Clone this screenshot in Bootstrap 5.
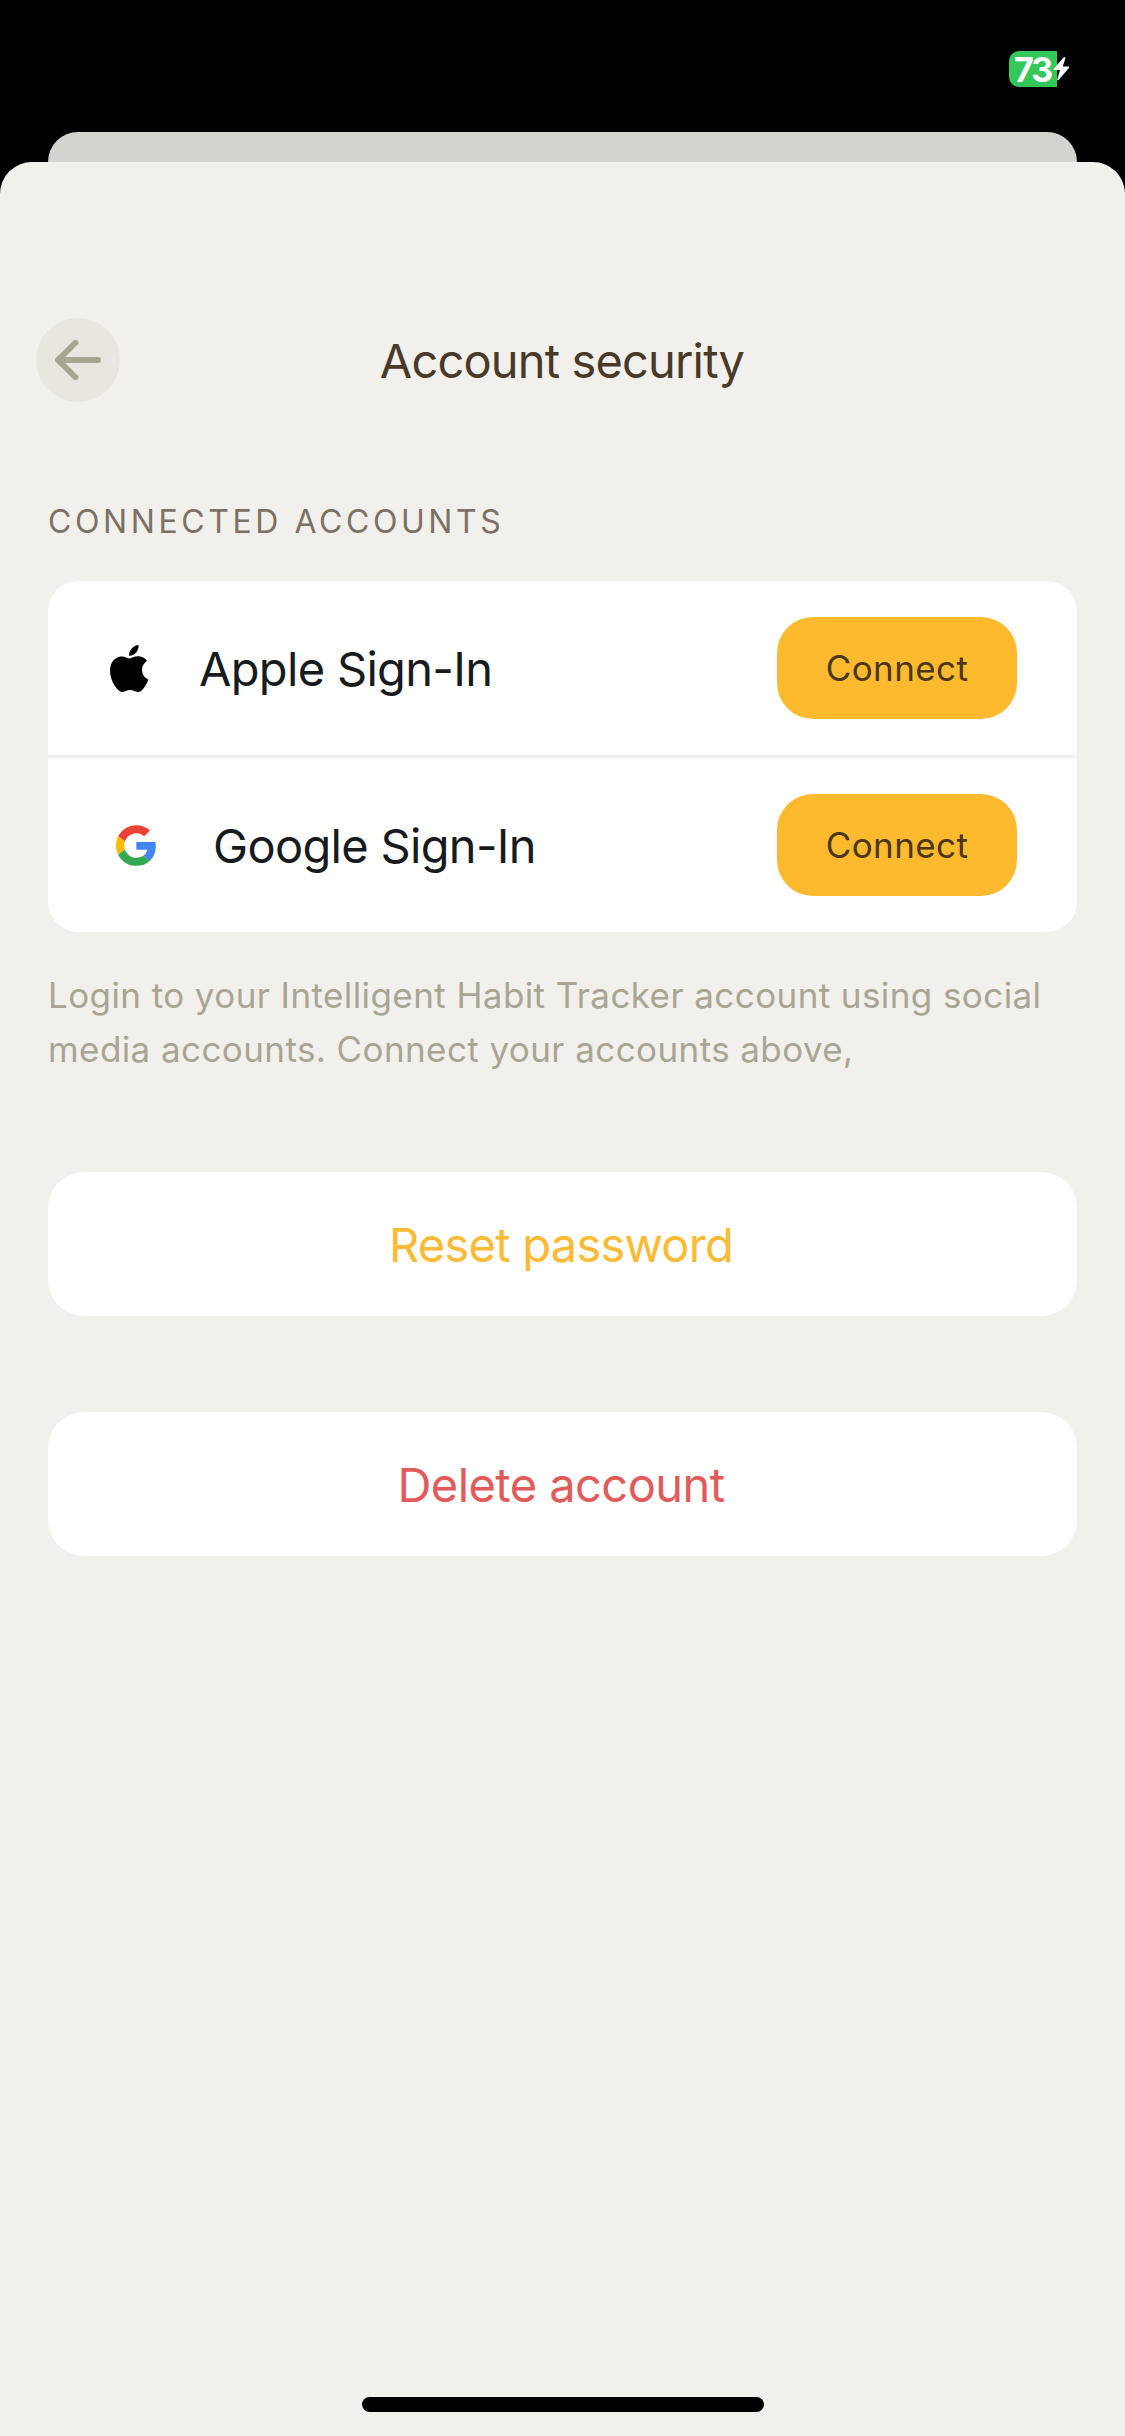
<!DOCTYPE html>
<html lang="en">
<head>
<meta charset="utf-8">
<meta name="viewport" content="width=device-width, initial-scale=1">
<title>Account security</title>
<link href="https://cdn.jsdelivr.net/npm/bootstrap@5.3.0/dist/css/bootstrap.min.css" rel="stylesheet">
<style>
  body { font-family: Inter, "Liberation Sans", sans-serif; background: #000; }
  .phone { width: 1125px; height: 2436px; }
  .status-strip { height: 132px; padding: 51px 54px 0 0; }
  .battery { width: 62px; height: 36px; }
  .battery-level { width: 48px; height: 36px; background: #34c759; border-radius: 10px 0 0 10px; font-size: 34px; font-weight: 700; line-height: 37px; letter-spacing: -2px; padding-left: 5px; }
  .battery-bolt { left: 43px; top: 4px; }
  .sheet-behind { height: 60px; margin: 0 48px -30px; background: #d5d3d0; border-radius: 30px 30px 0 0; }
  .sheet { background: #f2f0ec; border-radius: 32px 32px 0 0; padding: 156px 48px 24px; }
  .sheet-header { height: 84px; }
  .back-btn { left: -12px; width: 84px; height: 84px; background: #e9e6e0; }
  .sheet-title { font-size: 47px; font-weight: 400; line-height: 84px; letter-spacing: -.84px; color: #483929; padding: 2px 1px 0 0; }
  .section-label { font-size: 32px; line-height: 40px; font-weight: 400; letter-spacing: 3.58px; color: #7b7166; margin: 100px 0 39px; }
  .panel { --bs-list-group-border-width: 0; border-radius: 30px; overflow: hidden; }
  .panel .list-group-item { height: 174px; padding: 0 60px 0 62px; background: #fff; }
  .panel .list-group-item + .list-group-item { height: 177px; border-top: 3px solid #f1f0ee; padding-left: 68px; }
  .provider { font-size: 47px; line-height: 57px; letter-spacing: -.68px; color: #181b1e; }
  .provider-apple { gap: 50px; }
  .provider-google { gap: 57px; }
  .btn-connect { --bs-btn-bg: #feba2f; --bs-btn-color: #4b3716; width: 240px; height: 102px; border: 0; border-radius: 36px; font-size: 35px; line-height: 42px; letter-spacing: .4px; background: #feba2f; color: #4b3716; }
  .hint { font-size: 35px; line-height: 54px; letter-spacing: .41px; color: #a9a595; margin: 36px 0 96px; }
  .btn-wide { height: 144px; border: 0; border-radius: 36px; background: #fff; font-size: 47px; line-height: 57px; padding-right: 15px; }
  .btn-reset { color: #fdba35; letter-spacing: -.75px; margin-bottom: 96px; }
  .btn-delete { color: #e25b5a; letter-spacing: -.55px; }
  .home-bar { width: 402px; height: 15px; border-radius: 8px; background: #000; }
</style>
</head>
<body>
<div class="phone d-flex flex-column">
  <div class="status-strip d-flex justify-content-end align-items-start flex-shrink-0">
    <div class="battery position-relative">
      <div class="battery-level text-white">73</div>
      <svg class="battery-bolt position-absolute" width="20" height="28" viewBox="0 0 20 28" aria-hidden="true"><path d="M11.8 2.3 1.5 14.1Q1 15 2 15H8L5.3 24.3Q5.2 25.8 6.6 25L17.1 12.7Q17.6 11.6 16.4 11.6H10.8L13.4 3.2Q13.2 1.2 11.8 2.3Z" fill="#fff"/></svg>
    </div>
  </div>
  <div class="sheet-behind flex-shrink-0"></div>
  <main class="sheet position-relative flex-grow-1 d-flex flex-column">
    <header class="sheet-header position-relative d-flex justify-content-center align-items-center">
      <button class="back-btn btn rounded-circle border-0 p-0 position-absolute d-flex justify-content-center align-items-center" aria-label="Back">
        <svg width="84" height="84" viewBox="0 0 84 84" fill="none" stroke="#a8a492" stroke-width="5.8" stroke-linecap="round" stroke-linejoin="round"><path d="M39.5 24.8 22 42 39.5 59.2M22 42H62"/></svg>
      </button>
      <h1 class="sheet-title m-0">Account security</h1>
    </header>
    <h2 class="section-label">CONNECTED ACCOUNTS</h2>
    <div class="panel list-group">
      <div class="list-group-item d-flex justify-content-between align-items-center">
        <div class="provider provider-apple d-flex align-items-center">
          <svg width="39" height="47" viewBox="2.2 0 19.9 24" aria-hidden="true"><path d="M12.152 6.896c-.948 0-2.415-1.078-3.96-1.04-2.04.027-3.91 1.183-4.961 3.014-2.117 3.675-.546 9.103 1.519 12.09 1.013 1.454 2.208 3.09 3.792 3.039 1.52-.065 2.09-.987 3.935-.987 1.831 0 2.35.987 3.96.948 1.637-.026 2.676-1.48 3.676-2.948 1.156-1.688 1.636-3.325 1.662-3.415-.039-.013-3.182-1.221-3.22-4.857-.026-3.04 2.48-4.494 2.597-4.559-1.429-2.09-3.623-2.324-4.39-2.376-2-.156-3.675 1.09-4.61 1.09zM15.53 3.83c.843-1.012 1.4-2.427 1.245-3.83-1.207.052-2.662.805-3.532 1.818-.78.896-1.454 2.338-1.273 3.714 1.338.104 2.715-.688 3.559-1.701"/></svg>
          <span>Apple Sign-In</span>
        </div>
        <button class="btn btn-connect">Connect</button>
      </div>
      <div class="list-group-item d-flex justify-content-between align-items-center">
        <div class="provider provider-google d-flex align-items-center">
          <svg width="40" height="41" viewBox="0 0 47.2 48" aria-hidden="true"><path fill="#ea4335" d="M24 9.5c3.54 0 6.71 1.22 9.21 3.6l6.85-6.85C35.9 2.38 30.47 0 24 0 14.62 0 6.51 5.38 2.56 13.22l7.98 6.19C12.43 13.72 17.74 9.5 24 9.5z"/><path fill="#4285f4" d="M46.98 24.55c0-1.57-.15-3.09-.38-4.55H24v9.02h12.94c-.58 2.96-2.26 5.48-4.78 7.18l7.73 6c4.51-4.18 7.09-10.36 7.09-17.65z"/><path fill="#fbbc05" d="M10.53 28.59c-.48-1.45-.76-2.99-.76-4.59s.27-3.14.76-4.59l-7.98-6.19C.92 16.46 0 20.12 0 24c0 3.88.92 7.54 2.56 10.78l7.97-6.19z"/><path fill="#34a853" d="M24 48c6.48 0 11.93-2.13 15.89-5.81l-7.73-6c-2.15 1.45-4.92 2.3-8.16 2.3-6.26 0-11.57-4.22-13.47-9.91l-7.98 6.19C6.51 42.62 14.62 48 24 48z"/></svg>
          <span>Google Sign-In</span>
        </div>
        <button class="btn btn-connect">Connect</button>
      </div>
    </div>
    <p class="hint">Login to your Intelligent Habit Tracker account using social<br>media accounts. Connect your accounts above,</p>
    <button class="btn btn-wide btn-reset w-100">Reset password</button>
    <button class="btn btn-wide btn-delete w-100">Delete account</button>
    <div class="home-bar mt-auto mx-auto"></div>
  </main>
</div>
<script src="https://cdn.jsdelivr.net/npm/bootstrap@5.3.0/dist/js/bootstrap.bundle.min.js"></script>
</body>
</html>
